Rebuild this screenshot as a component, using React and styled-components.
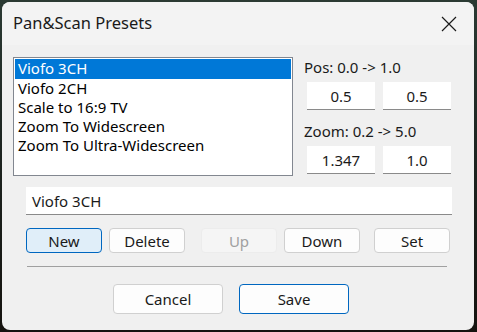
import React, { useState } from "react";
import styled, { createGlobalStyle } from "styled-components";

const Global = createGlobalStyle`
  html, body { margin: 0; padding: 0; }
  body {
    width: 477px;
    height: 332px;
    overflow: hidden;
    background: linear-gradient(180deg, #2b3a33 0%, #1e2622 40%, #15130f 100%);
    font-family: "Noto Sans", "Open Sans", sans-serif;
  }
`;

const Window = styled.div`
  margin: 2px 3px 0 2px;
  width: 472px;
  height: 328px;
  background: #f0f0f0;
  border-radius: 8px;
  overflow: hidden;
  display: flex;
  flex-direction: column;
`;

const TitleBar = styled.div`
  height: 43px;
  background: #f3f3f3;
  display: flex;
  align-items: center;
  justify-content: space-between;
  padding: 0 0 0 11px;
`;

const Title = styled.div`
  font-size: 16.5px;
  color: #1a1a1a;
  margin-top: -3px;
`;

const CloseBtn = styled.div`
  width: 46px;
  height: 43px;
  display: flex;
  align-items: center;
  justify-content: center;
  margin-right: 2px;
`;

const Body = styled.div`
  padding: 12px 0 0 11px;
  display: flex;
  flex-direction: column;
`;

const TopRow = styled.div`
  display: flex;
  gap: 11px;
`;

const ListBox = styled.div`
  width: 278px;
  height: 116px;
  background: #fff;
  border: 1px solid #828790;
  display: flex;
  flex-direction: column;
  padding-top: 1px;
  box-sizing: content-box;
`;

const Item = styled.div`
  height: 19px;
  line-height: 19px;
  font-size: 15px;
  padding-left: 3px;
  margin: 0 1px;
  color: ${(p) => (p.selected ? "#fff" : "#000")};
  background: ${(p) => (p.selected ? "#0078d7" : "transparent")};
  cursor: default;
  &:first-child { height: 20px; }
`;

const Side = styled.div`
  display: flex;
  flex-direction: column;
`;

const Label = styled.div`
  font-size: 15px;
  color: #1a1a1a;
  height: 20px;
  line-height: 20px;
  margin-top: ${(p) => p.top || 0}px;
`;

const Pair = styled.div`
  display: flex;
  gap: 8px;
  margin: 5px 0 0 3px;
`;

const Edit = styled.div`
  width: ${(p) => p.w || 68}px;
  height: 28px;
  background: #fff;
  border-bottom: 1px solid #8a8a8a;
  font-size: 15px;
  color: #1a1a1a;
  display: flex;
  align-items: center;
  justify-content: ${(p) => (p.left ? "flex-start" : "center")};
  padding-left: ${(p) => (p.left ? 6 : 0)}px;
  box-sizing: border-box;
`;

const NameRow = styled.div`
  margin: 11px 0 0 13px;
`;

const ButtonRow = styled.div`
  display: flex;
  margin: 13px 0 0 13px;
`;

const Btn = styled.div`
  width: ${(p) => p.w || 76}px;
  height: ${(p) => p.h || 25}px;
  margin-left: ${(p) => p.ml || 0}px;
  box-sizing: border-box;
  border-radius: 4px;
  border: 1px solid ${(p) => (p.primary ? "#0067c0" : p.disabled ? "#ececec" : "#d0d0d0")};
  background: ${(p) => (p.active ? "#e0eef9" : p.disabled ? "#f5f5f5" : "#fdfdfd")};
  color: ${(p) => (p.disabled ? "#a0a0a0" : "#1a1a1a")};
  font-size: 15px;
  display: flex;
  align-items: center;
  justify-content: center;
  cursor: default;
`;

const Separator = styled.div`
  margin: 13px 0 0 14px;
  width: 420px;
  height: 1px;
  background: #a0a0a0;
`;

const Footer = styled.div`
  display: flex;
  margin: 17px 0 0 100px;
`;

const items = [
  "Viofo 3CH",
  "Viofo 2CH",
  "Scale to 16:9 TV",
  "Zoom To Widescreen",
  "Zoom To Ultra-Widescreen",
];

export default function App() {
  const [sel, setSel] = useState(0);
  return (
    <>
      <Global />
      <Window>
        <TitleBar>
          <Title>Pan&amp;Scan Presets</Title>
          <CloseBtn>
            <svg width="16" height="16" viewBox="0 0 16 16">
              <path d="M1 1 L15 15 M15 1 L1 15" stroke="#1a1a1a" strokeWidth="1.2" />
            </svg>
          </CloseBtn>
        </TitleBar>
        <Body>
          <TopRow>
            <ListBox>
              {items.map((it, i) => (
                <Item key={it} selected={i === sel} onClick={() => setSel(i)}>
                  {it}
                </Item>
              ))}
            </ListBox>
            <Side>
              <Label top={0}>Pos: 0.0 -&gt; 1.0</Label>
              <Pair>
                <Edit>0.5</Edit>
                <Edit>0.5</Edit>
              </Pair>
              <Label top={11}>Zoom: 0.2 -&gt; 5.0</Label>
              <Pair>
                <Edit>1.347</Edit>
                <Edit>1.0</Edit>
              </Pair>
            </Side>
          </TopRow>
          <NameRow>
            <Edit w={426} left>{items[sel]}</Edit>
          </NameRow>
          <ButtonRow>
            <Btn active primary>New</Btn>
            <Btn ml={7}>Delete</Btn>
            <Btn ml={16} disabled>Up</Btn>
            <Btn ml={7}>Down</Btn>
            <Btn ml={14}>Set</Btn>
          </ButtonRow>
          <Separator />
          <Footer>
            <Btn w={110} h={30}>Cancel</Btn>
            <Btn w={110} h={30} ml={16} primary>Save</Btn>
          </Footer>
        </Body>
      </Window>
    </>
  );
}
